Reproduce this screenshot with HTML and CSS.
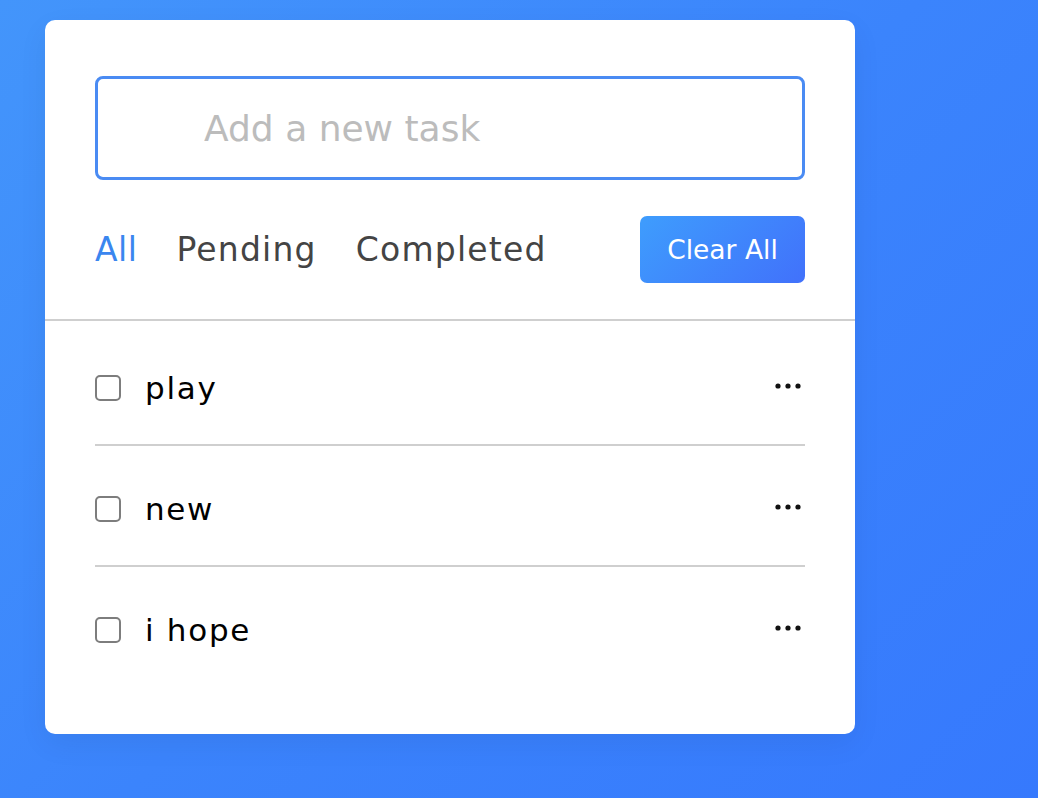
FILE: index.html
```html
<!DOCTYPE html>
<html lang="en">
<head>
<meta charset="utf-8">
<title>Todo</title>
<link rel="stylesheet" href="styles.css">
</head>
<body>
  <div class="card">
    <div class="task-input">
      <input type="text" placeholder="Add a new task">
    </div>
    <div class="controls">
      <div class="filters">
        <span class="filter active">All</span>
        <span class="filter">Pending</span>
        <span class="filter">Completed</span>
      </div>
      <button class="clear-btn">Clear All</button>
    </div>
    <div class="divider"></div>
    <ul class="task-box">
      <li class="task">
        <span class="check"></span>
        <span class="name">play</span>
        <svg class="dots" width="26" height="6" viewBox="0 0 26 6"><circle cx="3" cy="3" r="2.6"/><circle cx="13" cy="3" r="2.6"/><circle cx="23" cy="3" r="2.6"/></svg>
      </li>
      <li class="task">
        <span class="check"></span>
        <span class="name">new</span>
        <svg class="dots" width="26" height="6" viewBox="0 0 26 6"><circle cx="3" cy="3" r="2.6"/><circle cx="13" cy="3" r="2.6"/><circle cx="23" cy="3" r="2.6"/></svg>
      </li>
      <li class="task">
        <span class="check"></span>
        <span class="name">i hope</span>
        <svg class="dots" width="26" height="6" viewBox="0 0 26 6"><circle cx="3" cy="3" r="2.6"/><circle cx="13" cy="3" r="2.6"/><circle cx="23" cy="3" r="2.6"/></svg>
      </li>
    </ul>
  </div>
</body>
</html>
```
FILE: styles.css
```css
* { box-sizing: border-box; }
html, body { margin: 0; height: 100%; }
body {
  background: linear-gradient(135deg, #4395fb 0%, #3b84fc 50%, #3679fd 100%);
  font-family: "DejaVu Sans", "Open Sans", sans-serif;
  overflow: hidden;
}
.card {
  margin: 20px 0 0 45px;
  width: 810px;
  background: #fff;
  border-radius: 10px;
  padding: 56px 0 48px;
  box-shadow: 0 10px 30px rgba(0, 0, 0, 0.06);
}
.task-input { padding: 0 50px; }
.task-input input {
  display: block;
  width: 100%;
  height: 104px;
  border: 3px solid #4a8bf3;
  border-radius: 8px;
  padding: 0 20px 0 106px;
  font-family: inherit;
  font-size: 36px;
  color: #333;
  outline: none;
}
.task-input input::placeholder { color: #bcbcbc; }
.controls {
  margin-top: 36px;
  padding: 0 50px;
  display: flex;
  align-items: center;
  justify-content: space-between;
}
.filters { display: flex; gap: 39px; }
.filter {
  font-size: 33px;
  letter-spacing: 1.2px;
  color: #444;
}
.filter.active { color: #3a86ef; letter-spacing: 0.5px; }
.clear-btn {
  width: 165px;
  height: 67px;
  border: none;
  border-radius: 7px;
  background: linear-gradient(135deg, #3e9dfd 0%, #4171fb 100%);
  color: #fff;
  font-family: inherit;
  font-size: 26.5px;
  padding: 0;
}
.divider {
  margin-top: 36px;
  height: 2px;
  background: #cfcfcf;
}
.task-box {
  list-style: none;
  margin: 0;
  padding: 4px 50px 0;
}
.task {
  display: flex;
  align-items: center;
  height: 121px;
  padding: 48px 0 41px;
  border-bottom: 2px solid #cfcfcf;
}
.task:last-child { border-bottom: none; height: 119px; }
.check {
  width: 26px;
  height: 26px;
  border: 2px solid #7d7d7d;
  border-radius: 5px;
  flex: none;
}
.name {
  margin-left: 24px;
  font-size: 31px;
  letter-spacing: 1.7px;
  color: #000;
  flex: 1;
  line-height: 30px;
}
.dots {
  fill: #111;
  margin-right: 4px;
  margin-top: -4px;
}
```
